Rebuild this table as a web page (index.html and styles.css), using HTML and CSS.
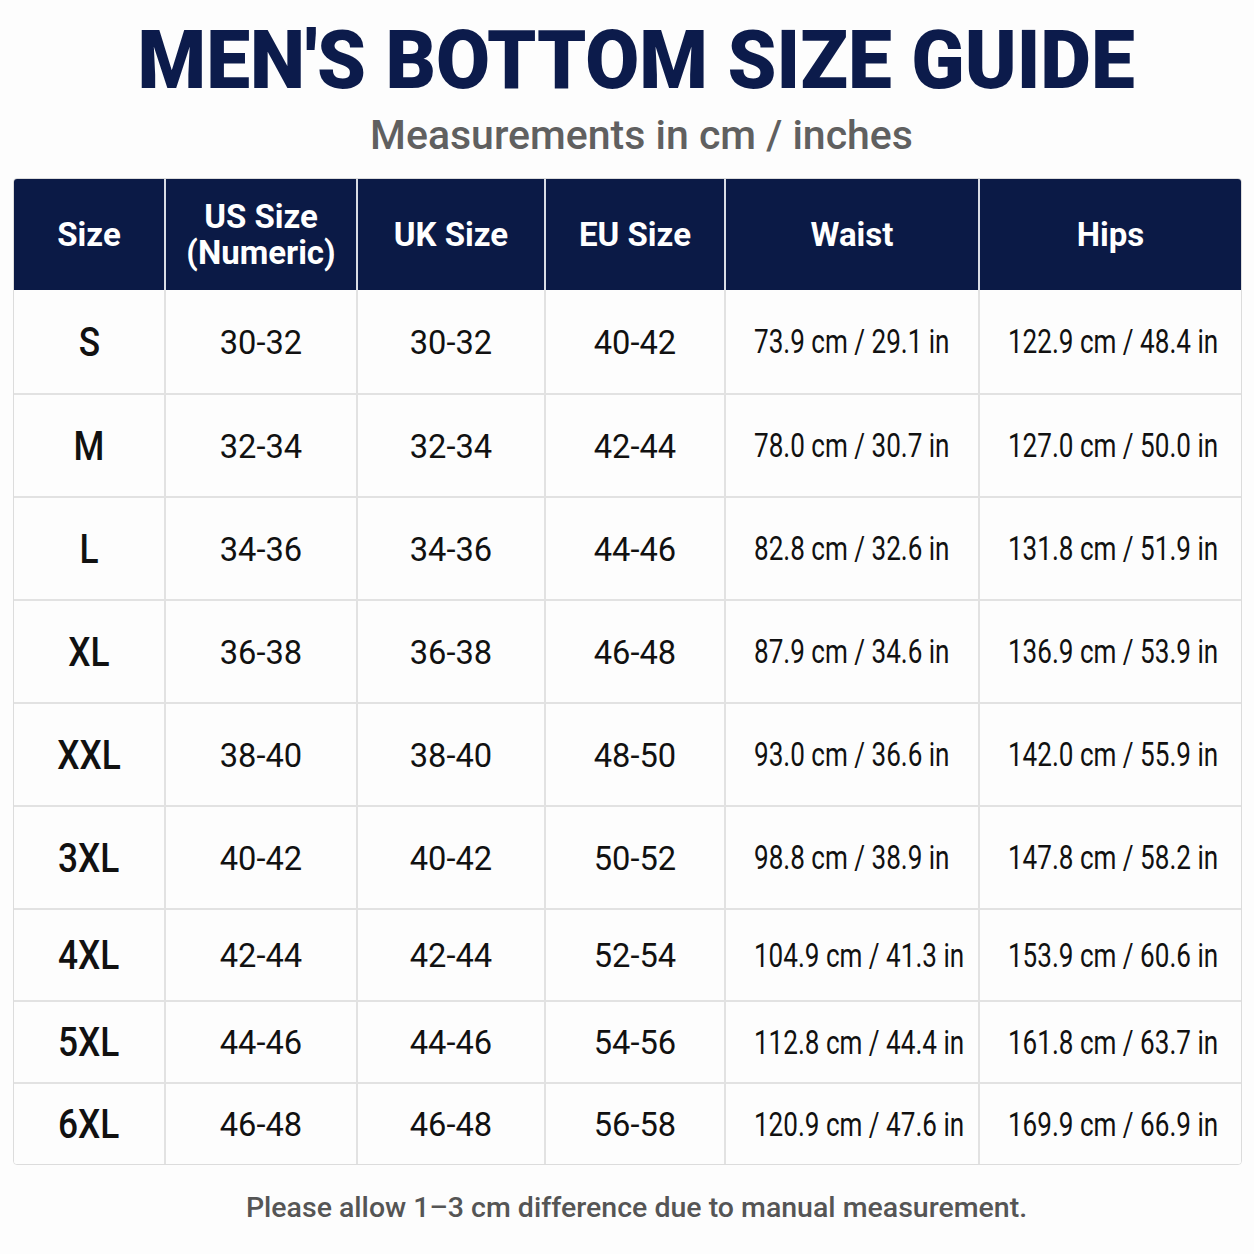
FILE: index.html
```html
<!DOCTYPE html>
<html>
<head>
  <title>Men's Bottom Size Guide</title>
  <meta name="viewport" content="width=device-width, initial-scale=1">
  <link rel="stylesheet" href="styles.css">
</head>
<body>
  <div class="guide">
    <h1 class="guide-title"><span>MEN'S BOTTOM SIZE GUIDE</span></h1>
    <p class="guide-subtitle">Measurements in cm / inches</p>

    <table class="size-table">
      <colgroup>
        <col style="width:150px">
        <col style="width:192px">
        <col style="width:188px">
        <col style="width:180px">
        <col style="width:254px">
        <col style="width:263px">
      </colgroup>
      <thead>
        <tr>
          <th>Size</th>
          <th>US Size<br>(Numeric)</th>
          <th>UK Size</th>
          <th>EU Size</th>
          <th>Waist</th>
          <th>Hips</th>
        </tr>
      </thead>
      <tbody>
        <tr class="row-tall">
          <td class="size"><span>S</span></td><td class="num"><span>30-32</span></td><td class="num"><span>30-32</span></td><td class="num"><span>40-42</span></td>
          <td class="meas"><span>73.9 cm / 29.1 in</span></td><td class="meas"><span>122.9 cm / 48.4 in</span></td>
        </tr>
        <tr class="row-tall">
          <td class="size"><span>M</span></td><td class="num"><span>32-34</span></td><td class="num"><span>32-34</span></td><td class="num"><span>42-44</span></td>
          <td class="meas"><span>78.0 cm / 30.7 in</span></td><td class="meas"><span>127.0 cm / 50.0 in</span></td>
        </tr>
        <tr class="row-tall">
          <td class="size"><span>L</span></td><td class="num"><span>34-36</span></td><td class="num"><span>34-36</span></td><td class="num"><span>44-46</span></td>
          <td class="meas"><span>82.8 cm / 32.6 in</span></td><td class="meas"><span>131.8 cm / 51.9 in</span></td>
        </tr>
        <tr class="row-tall">
          <td class="size"><span>XL</span></td><td class="num"><span>36-38</span></td><td class="num"><span>36-38</span></td><td class="num"><span>46-48</span></td>
          <td class="meas"><span>87.9 cm / 34.6 in</span></td><td class="meas"><span>136.9 cm / 53.9 in</span></td>
        </tr>
        <tr class="row-tall">
          <td class="size"><span>XXL</span></td><td class="num"><span>38-40</span></td><td class="num"><span>38-40</span></td><td class="num"><span>48-50</span></td>
          <td class="meas"><span>93.0 cm / 36.6 in</span></td><td class="meas"><span>142.0 cm / 55.9 in</span></td>
        </tr>
        <tr class="row-tall">
          <td class="size"><span>3XL</span></td><td class="num"><span>40-42</span></td><td class="num"><span>40-42</span></td><td class="num"><span>50-52</span></td>
          <td class="meas"><span>98.8 cm / 38.9 in</span></td><td class="meas"><span>147.8 cm / 58.2 in</span></td>
        </tr>
        <tr class="row-mid">
          <td class="size"><span>4XL</span></td><td class="num"><span>42-44</span></td><td class="num"><span>42-44</span></td><td class="num"><span>52-54</span></td>
          <td class="meas"><span>104.9 cm / 41.3 in</span></td><td class="meas"><span>153.9 cm / 60.6 in</span></td>
        </tr>
        <tr class="row-short">
          <td class="size"><span>5XL</span></td><td class="num"><span>44-46</span></td><td class="num"><span>44-46</span></td><td class="num"><span>54-56</span></td>
          <td class="meas"><span>112.8 cm / 44.4 in</span></td><td class="meas"><span>161.8 cm / 63.7 in</span></td>
        </tr>
        <tr class="row-short">
          <td class="size"><span>6XL</span></td><td class="num"><span>46-48</span></td><td class="num"><span>46-48</span></td><td class="num"><span>56-58</span></td>
          <td class="meas"><span>120.9 cm / 47.6 in</span></td><td class="meas"><span>169.9 cm / 66.9 in</span></td>
        </tr>
      </tbody>
    </table>

    <p class="guide-note">Please allow 1–3 cm difference due to manual measurement.</p>
  </div>
</body>
</html>
```

FILE: styles.css
```css
html {
  font-size: 16px;
}
body {
  margin: 0;
  background: #fdfdfd;
  color: #111;
  font-family: Roboto, "Liberation Sans", sans-serif;
}
* {
  box-sizing: border-box;
}
.guide {
  padding: 0 14px 0 13px;
  text-align: center;
}
.guide-title {
  margin: 0;
  padding: 14px 0 0 20px;
  font-size: 82px;
  font-weight: 900;
  line-height: 92px;
  color: #0c1b4b;
}
.guide-title span {
  display: inline-block;
  transform: scaleX(.955);
}
.guide-subtitle {
  margin: 0;
  padding-left: 30px;
  font-size: 41px;
  font-weight: 500;
  line-height: 58px;
  color: #606060;
}
.size-table {
  width: 1227px;
  margin-top: 14px;
  table-layout: fixed;
  border-collapse: separate;
  border-spacing: 0;
  border: 1px solid #dcdcdc;
  border-radius: 4px;
  overflow: hidden;
}
.size-table th {
  height: 111px;
  background: #0b1a46;
  color: #fff;
  font-size: 33px;
  font-weight: 700;
  line-height: 36px;
  border-left: 2px solid #d9dce4;
}
.size-table th:first-child,
.size-table td:first-child {
  border-left: 0;
}
.size-table td span {
  display: inline-block;
  white-space: nowrap;
  transform: scaleX(.96);
}
.size-table td {
  border-left: 2px solid #e2e2e2;
  border-top: 2px solid #e2e2e2;
  background: #fdfdfd;
  padding: 0;
}
.size-table tbody tr:first-child td {
  border-top: 0;
}
.row-tall td {
  height: 103px;
}
.row-mid td {
  height: 92px;
}
.row-short td {
  height: 82px;
}
.size {
  font-size: 41px;
  font-weight: 500;
}
.size-table td.size span {
  transform: scaleX(.86);
}
.num {
  font-size: 34px;
}
.meas {
  font-size: 33px;
}
.size-table td.meas span {
  transform: scaleX(.79);
}
.guide-note {
  margin: 0;
  padding: 26px 0 0 20px;
  font-size: 28.5px;
  font-weight: 500;
  color: #555;
}
```
